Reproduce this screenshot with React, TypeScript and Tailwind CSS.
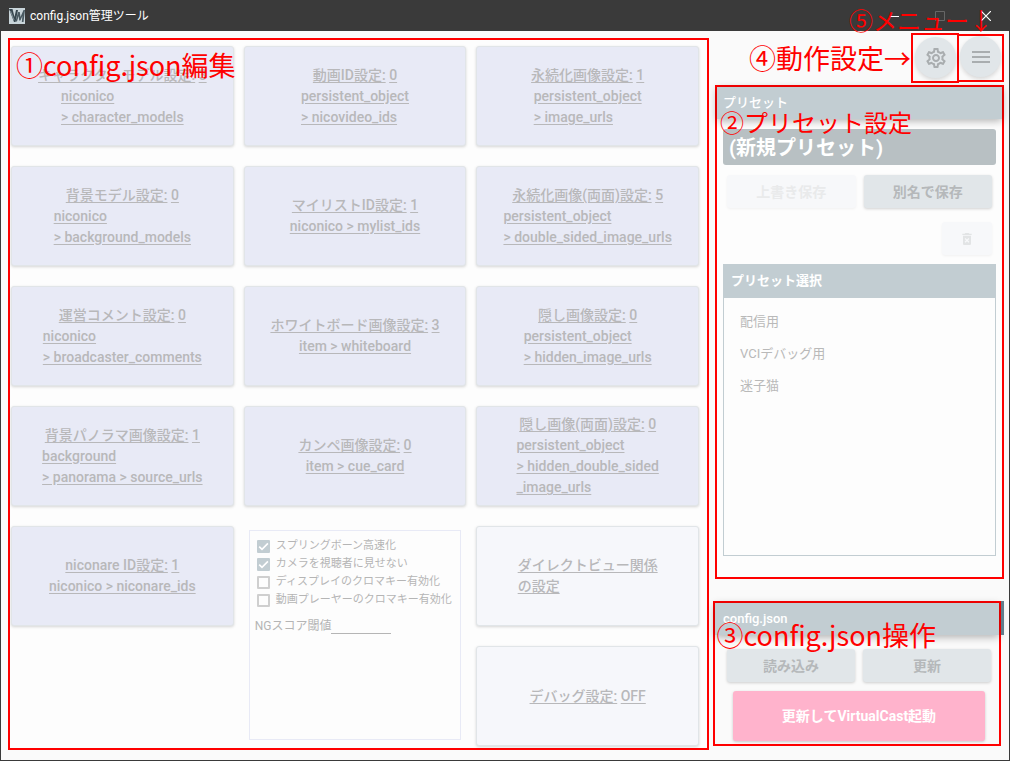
import type { ReactNode } from "react";

const jp = "font-['Roboto','Noto_Sans_CJK_JP',sans-serif]";

type CardProps = { title: string; value?: string; path?: string[]; light?: boolean };

function Card({ title, value, path = [], light = false }: CardProps) {
  return (
    <button
      type="button"
      className={`flex h-[100px] flex-col items-center justify-center rounded-[3px] border border-[#e1e5e8] text-sm leading-[21px] font-medium text-[#b8b8ba] shadow-[0_1px_3px_rgba(0,0,0,0.16)] ${
        light ? "bg-[#f6f7fb]" : "bg-[#e8eaf6]"
      }`}
    >
      <span className="text-left whitespace-pre-line">
        <span className="underline underline-offset-2">{title}</span>
        {value !== undefined && (
          <>
            <span> </span>
            <span className="underline underline-offset-2">{value}</span>
          </>
        )}
      </span>
      {path.length > 0 && (
        <span className="flex flex-col items-start">
          {path.map((line) => (
            <span key={line} className="underline underline-offset-2">
              {line}
            </span>
          ))}
        </span>
      )}
    </button>
  );
}

function Check({ label, checked = false }: { label: string; checked?: boolean }) {
  return (
    <label className="flex h-[18px] items-center gap-[6px] whitespace-nowrap">
      <span className="grid size-[13px] shrink-0">
        <input
          type="checkbox"
          defaultChecked={checked}
          className="peer col-start-1 row-start-1 size-[13px] appearance-none rounded-[1px] border-2 border-[#cfcfcf] checked:border-[#c2cdd2] checked:bg-[#c2cdd2]"
        />
        <svg
          viewBox="0 0 13 13"
          className="pointer-events-none invisible col-start-1 row-start-1 size-[13px] peer-checked:visible"
          fill="none"
          stroke="#fff"
          strokeWidth="1.6"
        >
          <path d="M2.2 6.6 5 9.4 10.9 3.4" />
        </svg>
      </span>
      {label}
    </label>
  );
}

function PanelHeader({ children }: { children: ReactNode }) {
  return (
    <h2 className="flex h-8 items-center bg-[#c2cdd2] text-[13px] font-medium text-white shadow-[0_2px_8px_rgba(0,0,0,0.3)]">
      {children}
    </h2>
  );
}

function Action({ children }: { children: ReactNode }) {
  return (
    <button
      type="button"
      className="h-[33px] rounded-[3px] bg-[#e1e6e9] text-sm font-bold text-[#b5b8ba] shadow-[0_1px_3px_rgba(0,0,0,0.18)]"
    >
      {children}
    </button>
  );
}

const note =
  "pointer-events-none absolute z-10 whitespace-nowrap font-['Noto_Sans_CJK_JP',sans-serif] leading-[32px] text-[#f00]";

export default function App() {
  return (
    <div className={`relative flex min-h-screen flex-col border-x border-b border-[#3a3a3a] bg-[#fafafa] ${jp}`}>
      <header className="flex h-[31px] shrink-0 items-center bg-[#3a3a3a] pl-2 text-xs text-white">
        <svg viewBox="0 0 16 16" className="mr-[5px] size-4">
          <path fill="#c9d5da" d="M0 0h16v16H0z" />
          <path fill="#37474f" d="M0 1h3.500l2 8L7 2h2l-2.500 12H5z" />
          <path fill="#4a5a62" d="M9 4h1.800l.7 5L14.500 2H16l-1.500 12h-1.700l.6-6-2 4.500h-1.200L9.600 8 8 13.500H6.500z" />
          <path stroke="#8fa0a8" strokeWidth=".8" d="m1.500 3 3.500 9" />
        </svg>
        <h1>config.json管理ツール</h1>
        <div className="ml-auto flex items-center gap-[36px] pr-[18px]">
          <button type="button" aria-label="最小化" className="block size-[10px]">
            <svg viewBox="0 0 10 10" stroke="#fff"><path d="M0 5.500h10" /></svg>
          </button>
          <button type="button" aria-label="最大化" disabled className="block size-[10px]">
            <svg viewBox="0 0 10 10" fill="none" stroke="#666"><path d="M.5.5h9v9h-9z" /></svg>
          </button>
          <button type="button" aria-label="閉じる" className="block size-[10px]">
            <svg viewBox="0 0 10 10" stroke="#fff" strokeWidth="1.200"><path d="m0 0 10 10M10 0 0 10" /></svg>
          </button>
        </div>
      </header>

      <div className="flex items-start gap-1 pr-[5px] pl-[7px]">
        <main className="mt-[7px] grid flex-1 grid-cols-3 gap-x-[10px] gap-y-5 border-2 border-[#f00] bg-[#fdfdfd] pt-[6px] pr-2 pb-[2px] pl-px">
          <Card title="キャラクターモデル設定:" value="3" path={["niconico", "> character_models"]} />
          <Card title="動画ID設定:" value="0" path={["persistent_object", "> nicovideo_ids"]} />
          <Card title="永続化画像設定:" value="1" path={["persistent_object", "> image_urls"]} />
          <Card title="背景モデル設定:" value="0" path={["niconico", "> background_models"]} />
          <Card title="マイリストID設定:" value="1" path={["niconico > mylist_ids"]} />
          <Card title="永続化画像(両面)設定:" value="5" path={["persistent_object", "> double_sided_image_urls"]} />
          <Card title="運営コメント設定:" value="0" path={["niconico", "> broadcaster_comments"]} />
          <Card title="ホワイトボード画像設定:" value="3" path={["item > whiteboard"]} />
          <Card title="隠し画像設定:" value="0" path={["persistent_object", "> hidden_image_urls"]} />
          <Card title="背景パノラマ画像設定:" value="1" path={["background", "> panorama > source_urls"]} />
          <Card title="カンペ画像設定:" value="0" path={["item > cue_card"]} />
          <Card
            title="隠し画像(両面)設定:"
            value="0"
            path={["persistent_object", "> hidden_double_sided", "_image_urls"]}
          />
          <Card title="niconare ID設定:" value="1" path={["niconico > niconare_ids"]} />
          <fieldset className="row-span-2 mx-[5px] mt-1 mb-[6px] border border-[#e8eaf6] px-[5px] pt-[6px] text-[11px] text-[#b5b5b5]">
            <div className="pl-[2px]">
              <Check label="スプリングボーン高速化" checked />
              <Check label="カメラを視聴者に見せない" checked />
              <Check label="ディスプレイのクロマキー有効化" />
              <Check label="動画プレーヤーのクロマキー有効化" />
            </div>
            <label className="mt-[7px] flex h-5 items-center text-xs">
              NGスコア閾値
              <input type="text" className="h-4 w-[60px] border-b border-[#b5b5b5] outline-none" />
            </label>
          </fieldset>
          <Card title={"ダイレクトビュー関係\nの設定"} light />
          <div className="col-start-3 grid">
            <Card title="デバッグ設定:" value="OFF" light />
          </div>
        </main>

        <aside className="w-[291px] shrink-0 pt-[2px]">
          <div className="flex items-start justify-end">
            <div className="h-[50px] w-12 border-2 border-[#f00] p-[2px]">
              <button
                type="button"
                aria-label="動作設定"
                className="flex size-[41px] items-center justify-center rounded-full bg-[#e1e6e9] shadow-[0_2px_4px_rgba(0,0,0,0.14)]"
              >
                <svg viewBox="0 0 24 24" className="size-6" fill="#a9adaf">
                  <path d="M19.430 12.980c.04-.32.07-.64.07-.98 0-.34-.03-.66-.07-.98l2.110-1.650c.19-.15.24-.42.12-.64l-2-3.460c-.09-.16-.26-.25-.44-.25-.06 0-.12.01-.17.03l-2.490 1c-.52-.4-1.080-.73-1.690-.98l-.38-2.650C14.460 2.180 14.250 2 14 2h-4c-.25 0-.46.18-.49.42l-.38 2.650c-.61.25-1.170.59-1.690.98l-2.490-1c-.06-.02-.12-.03-.18-.03-.17 0-.34.09-.43.25l-2 3.460c-.13.22-.07.49.12.64l2.110 1.650c-.04.32-.07.65-.07.98 0 .33.03.66.07.98l-2.110 1.650c-.19.15-.24.42-.12.64l2 3.460c.09.16.26.25.44.25.06 0 .12-.01.17-.03l2.490-1c.52.4 1.080.73 1.690.98l.38 2.650c.03.24.24.42.49.42h4c.25 0 .46-.18.49-.42l.38-2.650c.61-.25 1.170-.59 1.690-.98l2.490 1c.06.02.12.03.18.03.17 0 .34-.09.43-.25l2-3.460c.12-.22.07-.49-.12-.64l-2.110-1.650zm-1.980-1.710c.04.31.05.52.05.73 0 .21-.02.43-.05.73l-.14 1.130.89.7 1.080.84-.7 1.210-1.270-.51-1.040-.42-.9.68c-.43.32-.84.56-1.250.73l-1.060.43-.16 1.130-.2 1.350h-1.400l-.19-1.350-.16-1.130-1.060-.43c-.43-.18-.83-.41-1.230-.71l-.91-.7-1.060.43-1.270.51-.7-1.210 1.080-.84.89-.7-.14-1.130c-.03-.31-.05-.54-.05-.74s.02-.43.05-.73l.14-1.130-.89-.7-1.080-.84.7-1.210 1.270.51 1.040.42.9-.68c.43-.32.84-.56 1.250-.73l1.060-.43.16-1.130.2-1.350h1.390l.19 1.350.16 1.130 1.060.43c.43.18.83.41 1.230.71l.91.7 1.060-.43 1.270-.51.7 1.210-1.070.85-.89.7.14 1.130zM12 8c-2.210 0-4 1.790-4 4s1.790 4 4 4 4-1.790 4-4-1.790-4-4-4zm0 6c-1.100 0-2-.9-2-2s.9-2 2-2 2 .9 2 2-.9 2-2 2z" />
                </svg>
              </button>
            </div>
            <div className="mt-px h-12 w-[45px] border-y-2 border-r-2 border-[#f00] px-px">
              <button
                type="button"
                aria-label="メニュー"
                className="flex size-[41px] items-center justify-center rounded-full bg-[#e1e6e9] shadow-[0_2px_4px_rgba(0,0,0,0.14)]"
              >
                <svg viewBox="0 0 24 24" className="size-6" fill="#a9adaf">
                  <path d="M3 18h18v-2H3v2zm0-5h18v-2H3v2zm0-7v2h18V6H3z" />
                </svg>
              </button>
            </div>
          </div>

          <section className="mt-[2px] ml-[2px] h-[494px] border-2 border-[#f00] bg-[#fdfdfd]">
            <PanelHeader>
              <span className="pl-[6px]">プリセット</span>
            </PanelHeader>
            <div className="px-[6px] pt-[10px]">
              <input
                type="text"
                aria-label="プリセット名"
                defaultValue="(新規プリセット)"
                className="block h-9 w-full rounded-[3px] bg-[#b8c0c3] px-[6px] pb-[2px] text-xl font-bold text-white outline-none"
              />
              <div className="grid grid-cols-2 gap-2 px-1 pt-[10px]">
                <button
                  type="button"
                  disabled
                  className="h-[33px] rounded-[3px] bg-[#f7f8fa] text-sm font-bold text-[#e9eaeb] shadow-[0_1px_3px_rgba(0,0,0,0.05)]"
                >
                  上書き保存
                </button>
                <Action>別名で保存</Action>
              </div>
              <div className="flex justify-end px-1 pt-[14px]">
                <button
                  type="button"
                  disabled
                  aria-label="削除"
                  className="flex h-[33px] w-[50px] items-center justify-center rounded-[3px] bg-[#f7f8fa] shadow-[0_1px_3px_rgba(0,0,0,0.05)]"
                >
                  <svg viewBox="0 0 24 24" className="size-4" fill="#e2e4e5">
                    <path d="M6 19c0 1.100.9 2 2 2h8c1.100 0 2-.9 2-2V7H6v12zm2.460-7.120 1.410-1.410L12 12.590l2.120-2.120 1.410 1.410L13.410 14l2.120 2.120-1.410 1.410L12 15.410l-2.120 2.120-1.410-1.410L10.590 14l-2.130-2.120zM15.500 4l-1-1h-5l-1 1H5v2h14V4z" />
                  </svg>
                </button>
              </div>
              <div className="mt-[9px] h-[292px] border border-[#c2cdd2]">
                <h3 className="flex h-[33px] items-center bg-[#c2cdd2] px-[7px] pb-[2px] text-[13px] font-bold text-white">
                  プリセット選択
                </h3>
                <ul className="px-4 pt-2 text-[13px] leading-8 text-[#b9b9b9]">
                  <li>配信用</li>
                  <li>VCIデバッグ用</li>
                  <li>迷子猫</li>
                </ul>
              </div>
            </div>
          </section>

          <section className="relative mt-[22px] mr-[3px] h-[145px] border-2 border-[#f00]">
            <PanelHeader>
              <span className="pl-2">config.json</span>
            </PanelHeader>
            <span className="absolute -top-[2px] left-full ml-[2px] h-[34px] w-[3px] bg-[#607d8b]" />
            <div className="grid grid-cols-2 gap-2 pt-[14px] pr-2 pl-3">
              <Action>読み込み</Action>
              <Action>更新</Action>
            </div>
            <div className="pt-[9px] pr-[14px] pl-[18px]">
              <button
                type="button"
                className="h-[50px] w-full rounded-[3px] bg-[#ffb3cc] text-sm font-bold text-white shadow-[0_1px_3px_rgba(0,0,0,0.2)]"
              >
                更新してVirtualCast起動
              </button>
            </div>
          </section>
        </aside>
      </div>

      <p className={`${note} top-[49px] left-[15px] text-[27px]`}>①config.json編集</p>
      <p className={`${note} top-[106px] right-[97px] text-2xl`}>②プリセット設定</p>
      <p className={`${note} top-[619px] right-[73px] text-[27px]`}>③config.json操作</p>
      <p className={`${note} top-[42px] right-[98px] text-[27px]`}>④動作設定→</p>
      <p className={`${note} top-[4px] right-[16px] text-2xl`}>⑤メニュー↓</p>
    </div>
  );
}
